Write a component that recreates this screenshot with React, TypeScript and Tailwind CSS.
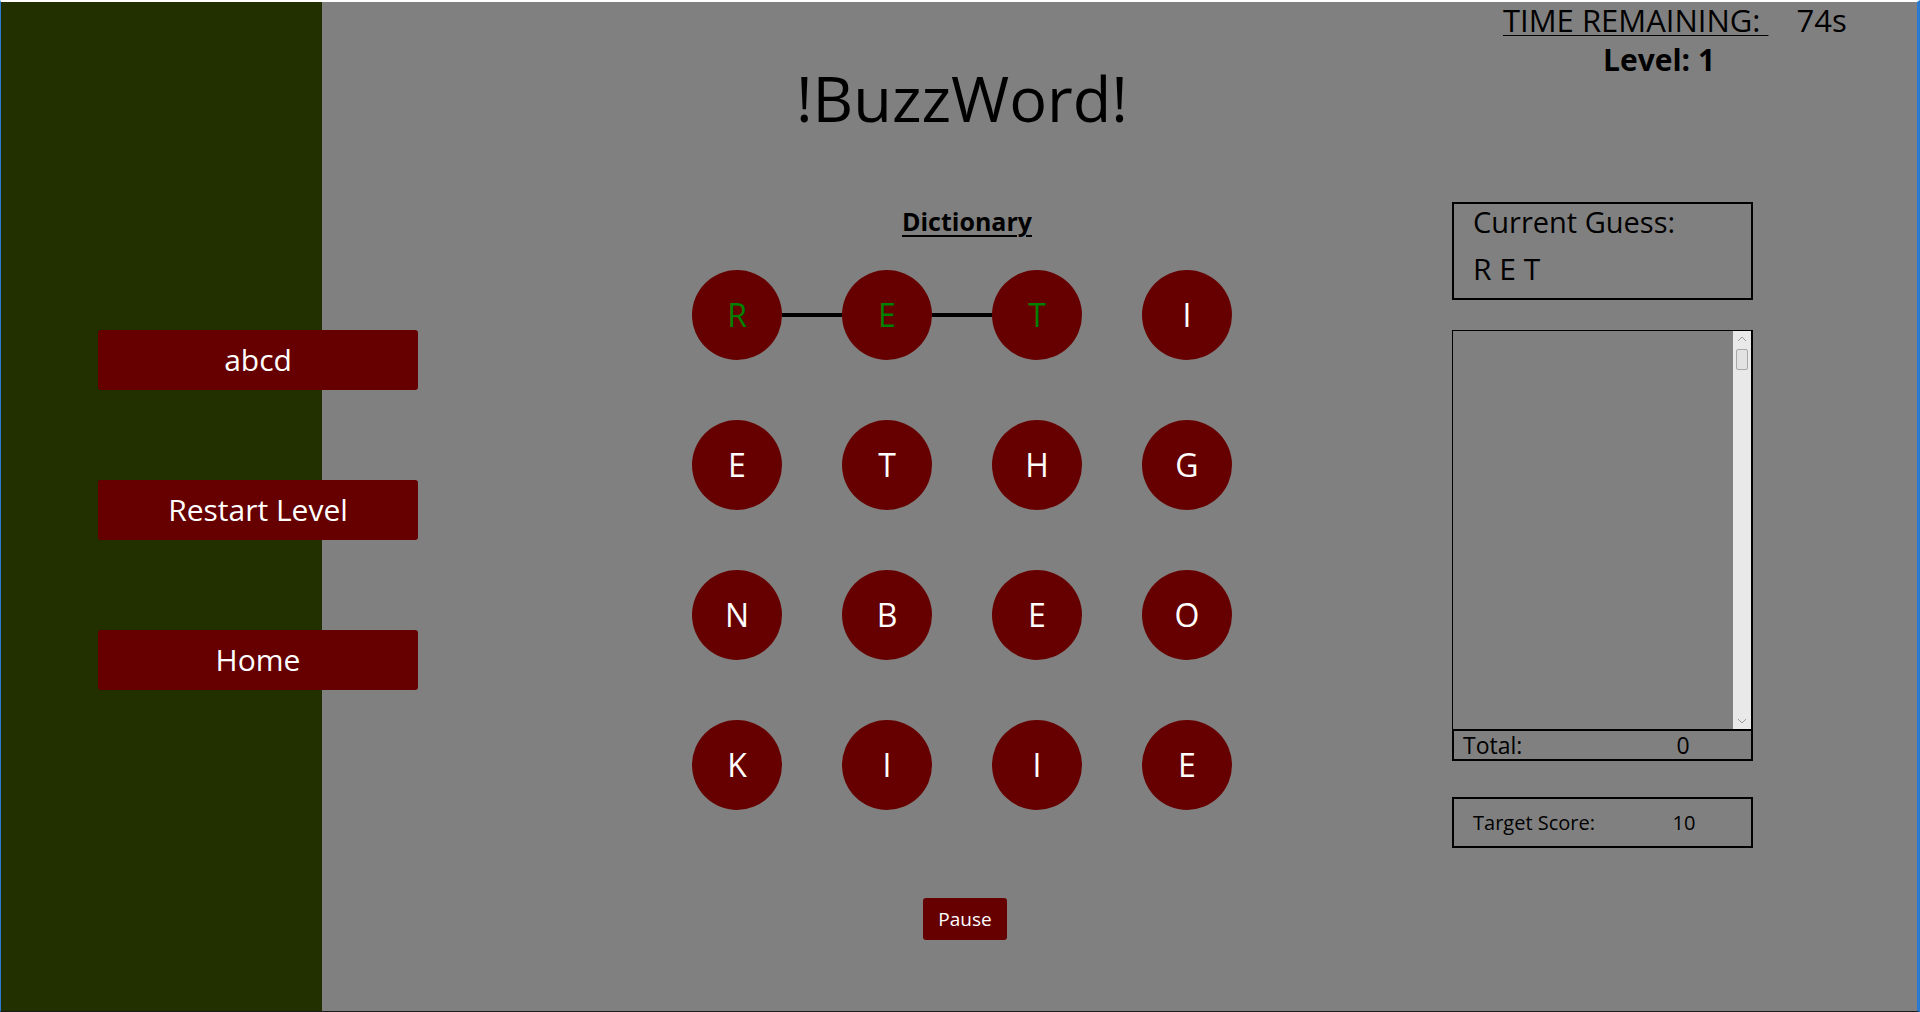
const board: string[][] = [
  ["R", "E", "T", "I"],
  ["E", "T", "H", "G"],
  ["N", "B", "E", "O"],
  ["K", "I", "I", "E"],
];

// cells that are part of the current guess (row, col)
const picked = ["0-0", "0-1", "0-2"];
const links = ["0-0", "0-1"]; // line drawn to the right of these cells

function Tile({ letter, active }: { letter: string; active: boolean }) {
  return (
    <div
      className={
        active
          ? "flex h-[90px] w-[90px] shrink-0 items-center justify-center rounded-full bg-[#660000] text-[32px] leading-none text-[#008000]"
          : "flex h-[90px] w-[90px] shrink-0 items-center justify-center rounded-full bg-[#660000] text-[32px] leading-none text-white"
      }
    >
      {letter}
    </div>
  );
}

function SideButton({ label }: { label: string }) {
  return (
    <button className="ml-[97px] flex h-[60px] w-[320px] shrink-0 items-center justify-center rounded-[3px] bg-[#660000] text-[30px] leading-none text-white">
      {label}
    </button>
  );
}

function Chevron({ up }: { up: boolean }) {
  return (
    <svg width="10" height="6" viewBox="0 0 10 6" className="mx-auto">
      <polyline
        points={up ? "1,5 5,1 9,5" : "1,1 5,5 9,1"}
        fill="none"
        stroke="#9a9a9a"
        strokeWidth="1"
      />
    </svg>
  );
}

export default function App() {
  return (
    <div className="flex h-[1012px] w-[1920px] border-t-2 border-r-[3px] border-b border-l border-t-white border-r-[#2a7ad1] border-b-[#1c1c1c] border-l-[#2a7ad1] bg-[#808080] font-['Open_Sans',sans-serif] text-black">
      {/* left rail */}
      <div className="flex w-[321px] shrink-0 flex-col items-start gap-[90px] bg-[#223000] pt-[328px]">
        <SideButton label="abcd" />
        <SideButton label="Restart Level" />
        <SideButton label="Home" />
      </div>

      <div className="flex flex-1 flex-col">
        {/* header */}
        <div className="flex h-[200px] shrink-0">
          <div className="ml-[340px] w-[600px] shrink-0 pt-[64px] text-center text-[63px] leading-none">
            !BuzzWord!
          </div>
          <div className="ml-[241px] flex flex-col pt-[3px]">
            <div className="flex text-[31px] leading-none">
              <span className="underline decoration-1 underline-offset-[3px]">
                TIME REMAINING:&nbsp;
              </span>
              <span className="ml-[28px]">74s</span>
            </div>
            <div className="mt-[9px] ml-[100px] text-[30px] font-bold leading-none">
              Level: 1
            </div>
          </div>
        </div>

        <div className="flex">
          {/* board */}
          <div className="ml-[340px] flex w-[600px] shrink-0 flex-col items-center">
            <div className="mt-[7px] ml-[10px] text-[25px] font-bold leading-none underline decoration-2 underline-offset-[4px]">
              Dictionary
            </div>
            <div className="mt-[36px] flex flex-col gap-[60px]">
              {board.map((row, r) => (
                <div key={r} className="flex">
                  {row.map((letter, c) => (
                    <div key={c} className="flex items-center">
                      <Tile letter={letter} active={picked.includes(`${r}-${c}`)} />
                      {c < 3 && (
                        <div className="flex h-[90px] w-[60px] items-center">
                          {links.includes(`${r}-${c}`) && (
                            <div className="h-[4px] w-full bg-black" />
                          )}
                        </div>
                      )}
                    </div>
                  ))}
                </div>
              ))}
            </div>
            <button className="mt-[88px] ml-[6px] flex h-[42px] w-[84px] items-center justify-center rounded-[3px] bg-[#660000] text-[19px] leading-none text-white">
              Pause
            </button>
          </div>

          {/* score panel */}
          <div className="ml-[190px] flex w-[301px] shrink-0 flex-col">
            <div className="flex h-[98px] flex-col border-2 border-black pt-[3px] pl-[19px]">
              <div className="text-[29px] leading-none">Current Guess:</div>
              <div className="mt-[18px] text-[30px] leading-none">R E T</div>
            </div>
            <div className="mt-[30px] flex h-[399px] border-t border-r-2 border-l border-black">
              <div className="flex-1" />
              <div className="flex w-[18px] flex-col bg-[#e9e9e9] pt-[5px] pb-[5px]">
                <Chevron up={true} />
                <div className="mx-auto mt-[7px] h-[21px] w-[12px] rounded-[2px] border border-[#a8a8a8] bg-[#e2e2e2]" />
                <div className="flex-1" />
                <Chevron up={false} />
              </div>
            </div>
            <div className="flex h-[32px] items-center border-2 border-black pl-[9px] text-[23px] leading-none">
              <span className="w-[200px] shrink-0">Total:</span>
              <span className="w-[40px] text-center">0</span>
            </div>
            <div className="mt-[36px] flex h-[51px] items-center border-2 border-black pl-[19px] text-[20px] leading-none">
              <span className="w-[191px] shrink-0">Target Score:</span>
              <span className="w-[40px] text-center">10</span>
            </div>
          </div>
        </div>
      </div>
    </div>
  );
}
